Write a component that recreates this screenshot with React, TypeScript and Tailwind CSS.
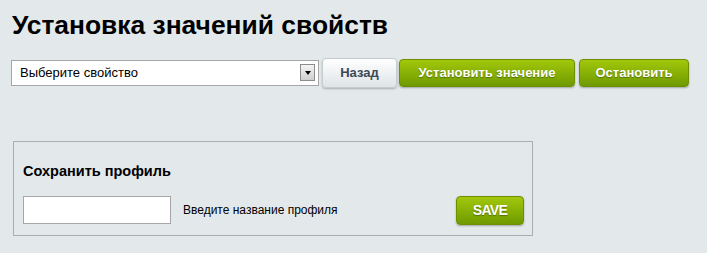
import React from "react";

export default function App() {
  return (
    <div
      className="w-[707px] h-[253px] bg-[#e3e9eb] overflow-hidden"
      style={{ fontFamily: '"Liberation Sans", Arial, sans-serif' }}
    >
      <div className="pl-[12px] pt-[12px]">
        <h1 className="text-[26.4px] leading-[27px] font-bold text-black">
          Установка значений свойств
        </h1>

        <div className="mt-[19px] flex items-center h-[30px]">
          <div className="relative ml-[-1px] w-[308px] h-[26px] bg-white border border-[#a6a6a6] flex items-center">
            <span className="pl-[8px] text-[13px] text-black">Выберите свойство</span>
            <div className="absolute right-[3px] top-[3px] w-[15px] h-[17px] border border-[#8c8c8c] bg-gradient-to-b from-[#f4f4f4] to-[#cfcfcf] flex items-center justify-center">
              <div className="w-0 h-0 border-l-[3.5px] border-r-[3.5px] border-t-[4px] border-l-transparent border-r-transparent border-t-black" />
            </div>
          </div>

          <button className="ml-[3px] w-[75px] h-[30px] rounded-[4px] border border-[#c6cbcd] bg-gradient-to-b from-[#ffffff] to-[#dfe4e6] shadow-[0_1px_2px_rgba(0,0,0,0.25)] text-[13px] font-bold text-[#3c4a55]">
            Назад
          </button>

          <button className="ml-[2px] w-[176px] h-[28px] rounded-[4px] border border-[#6d8f00] bg-gradient-to-b from-[#a2c80c] to-[#6f9a00] shadow-[0_1px_2px_rgba(0,0,0,0.3)] text-[13px] font-bold text-white [text-shadow:0_1px_1px_rgba(0,0,0,0.35)]">
            Установить значение
          </button>

          <button className="ml-[4px] w-[110px] h-[28px] rounded-[4px] border border-[#6d8f00] bg-gradient-to-b from-[#a2c80c] to-[#6f9a00] shadow-[0_1px_2px_rgba(0,0,0,0.3)] text-[13px] font-bold text-white [text-shadow:0_1px_1px_rgba(0,0,0,0.35)]">
            Остановить
          </button>
        </div>

        <div className="mt-[53px] ml-[1px] w-[520px] h-[95px] border border-[#a9aeb0] pl-[9px] pr-[10px] pt-[20px]">
          <div className="text-[14.5px] leading-[18px] font-bold text-black">Сохранить профиль</div>
          <div className="mt-[15px] flex items-center">
            <input
              type="text"
              className="w-[148px] h-[28px] bg-white border border-[#a6a6a6] outline-none"
            />
            <span className="ml-[12px] text-[12px] text-black">Введите название профиля</span>
            <button className="ml-auto w-[68px] h-[29px] rounded-[4px] border border-[#6d8f00] bg-gradient-to-b from-[#a2c80c] to-[#6f9a00] shadow-[0_1px_2px_rgba(0,0,0,0.3)] text-[14px] tracking-[-0.6px] font-bold text-white [text-shadow:0_1px_1px_rgba(0,0,0,0.35)] mr-[-2px] mt-[1px]">
              SAVE
            </button>
          </div>
        </div>
      </div>
    </div>
  );
}
